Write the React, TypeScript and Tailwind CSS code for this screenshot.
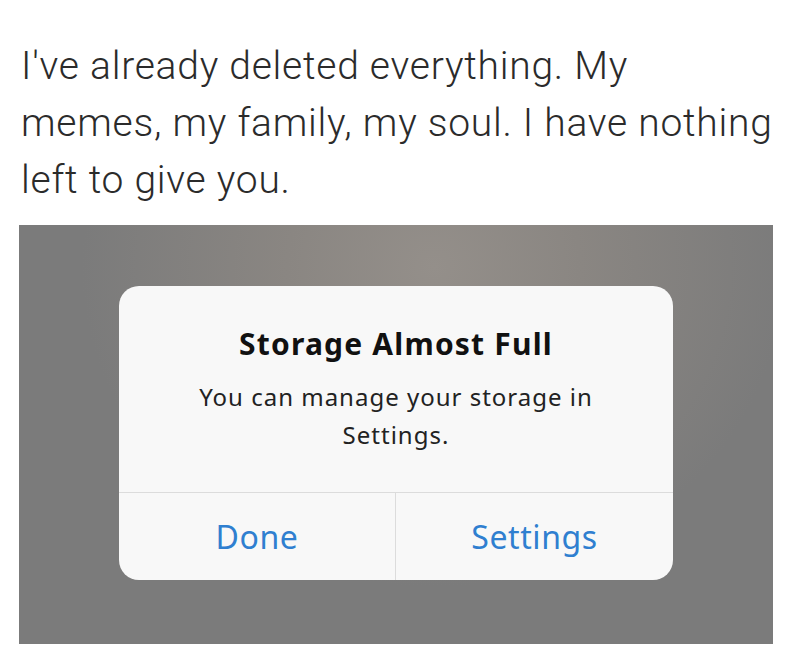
import React from "react";

const lines = [
  "I've already deleted everything. My",
  "memes, my family, my soul. I have nothing",
  "left to give you.",
];

export default function App() {
  return (
    <div className="w-[792px] h-[650px] bg-white flex flex-col overflow-hidden">
      {/* tweet text */}
      <p
        className="pl-[21px] pt-[38px] text-[39px] leading-[57px] font-light text-[#2b2b2b] tracking-[0.75px] whitespace-nowrap"
        style={{ fontFamily: "Roboto, 'Liberation Sans', sans-serif" }}
      >
        {lines.map((l) => (
          <span key={l} className="block">
            {l}
          </span>
        ))}
      </p>

      {/* screenshot of the alert */}
      <div className="mt-[16px] ml-[19px] w-[754px] h-[419px] flex items-start justify-center bg-[#7b7b7b] bg-[radial-gradient(ellipse_at_55%_10%,#948f8a_0%,#8a8682_25%,#7b7b7b_60%)]">
        <div
          className="mt-[61px] w-[554px] h-[294px] rounded-[20px] bg-[#f8f8f8] flex flex-col"
          style={{ fontFamily: "'Noto Sans', Roboto, sans-serif" }}
        >
          <div className="flex-1 flex flex-col items-center pt-[40px]">
            <h2 className="text-[30px] leading-[36px] font-bold text-[#111] tracking-[1.2px]">
              Storage Almost Full
            </h2>
            <p className="mt-[16px] text-[24px] leading-[38px] text-center text-[#222] tracking-[1px]">
              You can manage your storage in
              <br />
              Settings.
            </p>
          </div>
          <div className="h-[88px] border-t border-[#dcdcdc] grid grid-cols-2">
            <button className="text-[32px] text-[#2f7fd0] tracking-[0.6px] border-r border-[#dcdcdc]">
              Done
            </button>
            <button className="text-[32px] text-[#2f7fd0] tracking-[0.6px]">Settings</button>
          </div>
        </div>
      </div>
    </div>
  );
}
